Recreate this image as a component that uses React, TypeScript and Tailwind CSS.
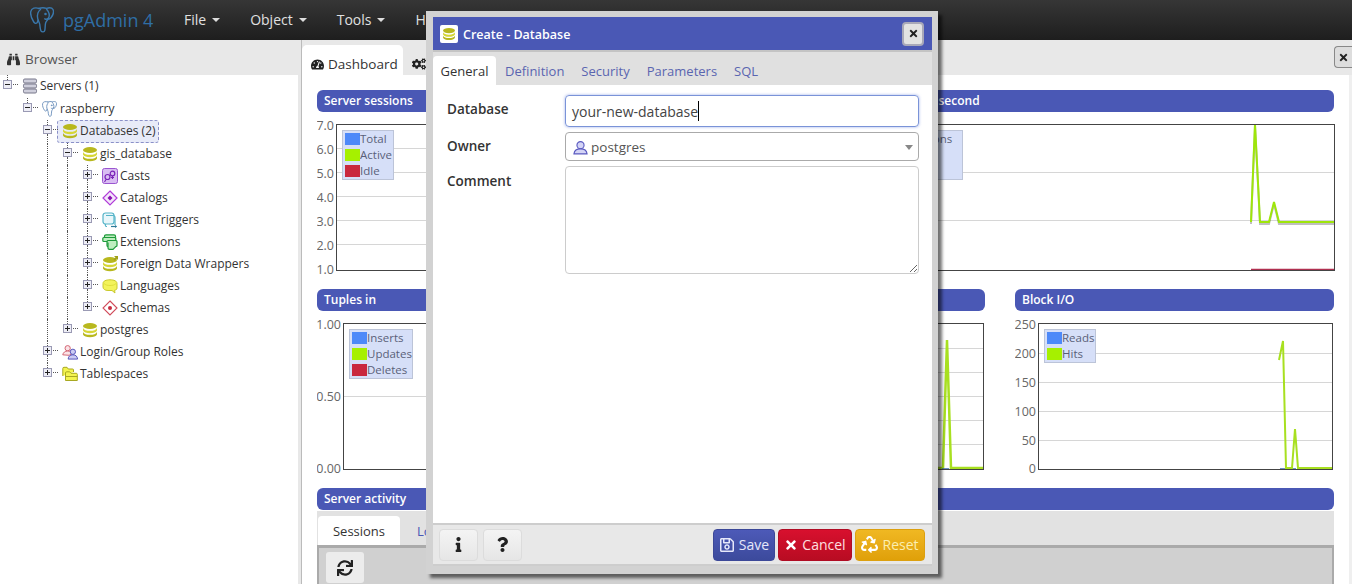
import React from "react";
import { FaBinoculars, FaTachometerAlt, FaCogs, FaTimes, FaInfo, FaQuestion, FaRegSave, FaRecycle, FaSync } from "react-icons/fa";

const Elephant = ({ className, color, sw }: { className: string; color: string; sw: string }) => (
  <svg viewBox="0 0 24 26" className={className} fill="none" stroke={color} strokeWidth={sw} strokeLinejoin="round" strokeLinecap="round">
    <path d="M9 1.500C5.500.2 1.500 1 .8 4.500c-.6 3.500 1 7.500 3 10.500 1 1.500 2.300 1.800 3.200.8.5-.6.8-1.500 1-2.300" />
    <path d="M9 1.500c2-.8 5-.9 7.500-.2 2.500-.8 5.500-.6 6.500 1.200 1.200 2.500-.2 6-2 8.300-.8 1-1.800 1.300-2.500 1" />
    <path d="M10.500 2.500C8 4.500 7 8 7.700 11.500c.5 2.500 1.800 4 2.100 6 .3 2 .2 4.500 1.200 6.300.9 1.500 3.300 1.500 3.800-.5.5-2.200.2-5 .8-7.300.5-2 2.200-3 3-4.800 1.200-2.800.5-6.200-2-9" />
    <path d="M18.500 11c-1.200 1.300-2.500 1.500-3.700.8" />
    <circle cx="15.500" cy="7" r=".6" fill={color} />
  </svg>
);

const Db = ({ c = "#b8b81e", arrow = false }: { c?: string; arrow?: boolean }) => (
  <svg viewBox="0 0 16 16" className="h-4 w-4">
    <ellipse cx="8" cy="4" rx="7" ry="3" fill={c} />
    <path d="M1 6c.8 2 3.500 2.800 7 2.800S14.200 8 15 6v2.500c-.8 1.800-3.500 2.700-7 2.700S1.800 10.300 1 8.500z" fill="#d6d635" />
    <path d="M1 10c.8 2 3.500 2.800 7 2.800s6.200-.8 7-2.800v2.500c-.8 1.800-3.500 2.700-7 2.700s-6.200-.9-7-2.700z" fill={c} />
    {arrow && <path d="M12 0h4v4l-1.300-1.300-2 2-1.200-1.200 2-2z" fill="#a0a018" />}
  </svg>
);

const Servers = () => (
  <svg viewBox="0 0 16 16" className="h-4 w-4" fill="#cfcfdc" stroke="#77778a" strokeWidth="1">
    <rect x="1.500" y="1" width="13" height="4" rx="1.300" />
    <rect x="1.500" y="6" width="13" height="4" rx="1.300" />
    <rect x="1.500" y="11" width="13" height="4" rx="1.300" />
  </svg>
);
const Casts = () => (
  <svg viewBox="0 0 16 16" className="h-4 w-4" fill="none">
    <rect x=".5" y=".5" width="15" height="15" rx="2" fill="#d9bdf2" stroke="#9a55d0" />
    <circle cx="5.500" cy="9" r="2.500" stroke="#7a22b8" strokeWidth="1.200" />
    <circle cx="10.500" cy="5.500" r="2.300" stroke="#7a22b8" strokeWidth="1.200" />
    <path d="M4 11.500l-1.500 2.500M10.500 8v3M9 9.500h3" stroke="#7a22b8" strokeWidth="1.100" />
  </svg>
);
const Catalogs = () => (
  <svg viewBox="0 0 16 16" className="h-4 w-4">
    <path d="M8 1l7 7-7 7-7-7z" fill="#f3e6fa" stroke="#b03ad8" strokeWidth="1.200" />
    <path d="M8 5.500l2.500 2.500L8 10.500 5.500 8z" fill="#8a10b0" />
  </svg>
);
const Events = () => (
  <svg viewBox="0 0 16 16" className="h-4 w-4" fill="#fff" stroke="#55b4c8" strokeWidth="1.200">
    <rect x="1" y="1" width="11" height="11" rx="2.500" fill="#e8f6fa" />
    <path d="M5 14.500h-.5C3 14.500 3.500 13 3.500 12M4 3.500h7c1.500 0 2 .8 2 2V13" fill="none" />
    <path d="M9 14.500h5.500" stroke="#2a7a98" />
    <path d="M13 13l2 1.500-2 1.500z" fill="#2a7a98" stroke="none" />
  </svg>
);
const Extensions = () => (
  <svg viewBox="0 0 16 16" className="h-4 w-4" fill="#bfeec0" stroke="#1d9a3a" strokeWidth="1.200">
    <rect x="2.500" y=".8" width="11" height="5" rx="1.500" />
    <rect x=".8" y="3.500" width="13" height="4" rx="1" />
    <rect x="5" y="6.500" width="10" height="6" rx="1" />
    <path d="M6 8.500v5.500c0 1 .8 1.300 1.500 1.300h3.500l3-3" />
  </svg>
);
const Languages = () => (
  <svg viewBox="0 0 16 16" className="h-4 w-4">
    <path d="M1 5.500C1 3 4 1.800 8 1.800s7 1.200 7 3.700v4.500c0 1.500-1 2-2.500 2.300l.5 2.700-3-2.500H6C3 12.500 1 11 1 9z" fill="#f3f35a" stroke="#c9c92c" />
    <path d="M2 5.500c1.500 1.500 3.500 2 6 2s4.500-.5 6-2" fill="none" stroke="#e0e03a" />
  </svg>
);
const Schemas = () => (
  <svg viewBox="0 0 16 16" className="h-4 w-4">
    <path d="M8 1l7 7-7 7-7-7z" fill="#fff" stroke="#d04a5a" strokeWidth="1.100" />
    <circle cx="8" cy="8" r="2" fill="#c82a3e" />
  </svg>
);
const Roles = () => (
  <svg viewBox="0 0 18 16" className="h-4 w-[17px]">
    <circle cx="6" cy="4" r="2.800" fill="#fbe3e6" stroke="#d0606e" />
    <path d="M.8 11c.5-2.500 2.300-4 5.200-4s4 1 4.500 3l-3 1.500z" fill="#fbe3e6" stroke="#d0606e" />
    <circle cx="11.500" cy="7.800" r="2.800" fill="#ccccf4" stroke="#5050b8" />
    <path d="M6.500 15.500c.3-3 2-4.500 5-4.500s4.700 1.500 5 4.500z" fill="#ccccf4" stroke="#5050b8" />
  </svg>
);
const Tablespaces = () => (
  <svg viewBox="0 0 16 16" className="h-4 w-4" fill="#f4f44e" stroke="#a8a822">
    <path d="M.8 10V2.500c0-.8.4-1.200 1.200-1.200h3l1.300 1.700h4.200c.8 0 1 .4 1 1v2" />
    <path d="M3.500 14.500V7c0-.8.4-1.200 1.200-1.200h3l1.300 1.500h5.300c.6 0 1 .4 1 1v6.200z" />
    <path d="M3.500 10.500h12" fill="none" />
  </svg>
);
const UserIcon = () => (
  <svg viewBox="0 0 16 16" className="h-[15px] w-[15px]" fill="#d4d4f6" stroke="#5a5ac0" strokeWidth="1.200">
    <circle cx="8" cy="5.500" r="3.800" />
    <path d="M1 14.800c.4-3.300 2.700-5.300 7-5.300s6.600 2 7 5.300z" />
  </svg>
);

const Expander = ({ open, more }: { open: boolean; more: boolean }) => (
  <div className="relative h-full w-5 shrink-0">
    <div className="absolute left-[7px] top-0 h-[5px] border-l border-dotted border-[#555]" />
    {more && <div className="absolute bottom-0 left-[7px] top-[14px] border-l border-dotted border-[#555]" />}
    <div className="absolute left-[13px] top-[9px] w-[5px] border-t border-dotted border-[#555]" />
    <div className="absolute left-[3px] top-[5px] flex h-[9px] w-[9px] items-center justify-center border border-[#9a9ab4] bg-[#eeeef6]">
      <div className="absolute h-px w-[5px] bg-[#222]" />
      {!open && <div className="absolute h-[5px] w-px bg-[#222]" />}
    </div>
  </div>
);

type RowT = { label: string; icon: React.ReactNode; guides: boolean[]; open?: boolean; more?: boolean; sel?: boolean; mt?: boolean };
const elephantSm = <Elephant className="h-4 w-[15px]" color="#6f93bd" sw="1.500" />;
const rows: RowT[] = [
  { label: "Servers (1)", icon: <Servers />, guides: [], open: true },
  { label: "raspberry", icon: elephantSm, guides: [false], open: true, mt: true },
  { label: "Databases (2)", icon: <Db />, guides: [false, false], open: true, more: true, sel: true },
  { label: "gis_database", icon: <Db />, guides: [false, false, true], open: true, more: true, mt: true },
  { label: "Casts", icon: <Casts />, guides: [false, false, true, true], more: true },
  { label: "Catalogs", icon: <Catalogs />, guides: [false, false, true, true], more: true },
  { label: "Event Triggers", icon: <Events />, guides: [false, false, true, true], more: true },
  { label: "Extensions", icon: <Extensions />, guides: [false, false, true, true], more: true },
  { label: "Foreign Data Wrappers", icon: <Db arrow />, guides: [false, false, true, true], more: true },
  { label: "Languages", icon: <Languages />, guides: [false, false, true, true], more: true },
  { label: "Schemas", icon: <Schemas />, guides: [false, false, true, true] },
  { label: "postgres", icon: <Db />, guides: [false, false, true] },
  { label: "Login/Group Roles", icon: <Roles />, guides: [false, false], more: true },
  { label: "Tablespaces", icon: <Tablespaces />, guides: [false, false] },
];

const TreeRow = ({ r }: { r: RowT }) => (
  <div className={r.mt ? "mt-px flex h-[22px] items-center" : "flex h-[22px] items-center"}>
    {r.guides.map((g, i) => (
      <div key={i} className="h-full w-5 shrink-0 pl-[7px]">
        {g && <div className="h-full border-l border-dotted border-[#555]" />}
      </div>
    ))}
    <Expander open={!!r.open} more={!!r.more} />
    {r.sel ? (
      <div className="-ml-[3px] flex h-[23px] items-center rounded-[3px] border border-dashed border-[#8a90c8] bg-[#e8ebf8] pl-[4px] pr-[2px]">
        <div className="flex w-[18px] shrink-0">{r.icon}</div>
        <span>{r.label}</span>
      </div>
    ) : (
      <>
        <div className="flex w-5 shrink-0 pl-[2px]">{r.icon}</div>
        <span>{r.label}</span>
      </>
    )}
  </div>
);

const BLUE = "#4d89f9";
const GREEN = "#a6f000";
const RED = "#c9283e";

type Line = { pts: string; color: string; w?: number; shadow?: boolean };
type ChartP = {
  x: number; y: number; w: number; h: number;
  plot: [number, number, number, number];
  ticks: [string, number][];
  grid: number[];
  legend?: { x: number; y: number; w: number; items: [string, string][] };
  lines?: Line[];
};

const Chart = ({ x, y, w, h, plot, ticks, grid, legend, lines }: ChartP) => {
  const [l, t, r, b] = plot;
  return (
    <svg viewBox={`${x} ${y} ${w} ${h}`} style={{ width: w, height: h }} className="block shrink-0">
      {grid.map((g) => (
        <line key={g} x1={l} x2={r} y1={g + 0.5} y2={g + 0.5} stroke="#d6d6d6" />
      ))}
      {lines?.filter((n) => n.shadow).map((n, i) => (
        <polyline key={i} points={n.pts} transform="translate(0 2)" fill="none" stroke="rgba(0,0,0,.25)" strokeWidth={n.w ?? 2} />
      ))}
      {lines?.map((n, i) => (
        <polyline key={i} points={n.pts} fill="none" stroke={n.color} strokeWidth={n.w ?? 2} />
      ))}
      <rect x={l + 0.5} y={t + 0.5} width={r - l} height={b - t} fill="none" stroke="#444" />
      {ticks.map(([s, ty]) => (
        <text key={s} x={l - 2} y={ty + 4.5} textAnchor="end" fontSize="12.500" fill="#666">{s}</text>
      ))}
      {legend && (
        <g>
          <rect x={legend.x + 0.5} y={legend.y + 0.5} width={legend.w} height={legend.items.length * 16 + 1} fill="#d6dff8" stroke="#bcc4d8" />
          {legend.items.map(([s, c], i) => (
            <g key={s}>
              <rect x={legend.x + 3} y={legend.y + 3 + i * 16} width={15} height={12} fill={c} />
              <text x={legend.x + 18} y={legend.y + 13 + i * 16} fontSize="11.500" fill="#5a5f78">{s}</text>
            </g>
          ))}
        </g>
      )}
    </svg>
  );
};

const SecHead = ({ title, className }: { title: React.ReactNode; className?: string }) => (
  <div className={`flex h-[22px] items-center rounded-[6px] bg-[#4a58b5] px-[7px] text-[12px] font-semibold text-white ${className ?? ""}`}>{title}</div>
);

const leg3 = (a: string, b: string, c: string): [string, string][] => [[a, BLUE], [b, GREEN], [c, RED]];

const MenuItem = ({ label }: { label: string }) => (
  <div className="flex items-center pr-[30px]">
    <span>{label}</span>
    <span className="ml-[6px] mt-[2px] h-0 w-0 border-x-[4px] border-t-[4px] border-x-transparent border-t-[#ddd]" />
  </div>
);

const Btn = ({ children, className }: { children: React.ReactNode; className: string }) => (
  <div className={`flex h-[32px] items-center justify-center rounded-[4px] border text-[14px] ${className}`}>{children}</div>
);

export default function App() {
  return (
    <div className="relative flex h-[584px] w-[1352px] flex-col overflow-hidden bg-white font-['Open_Sans',sans-serif] text-[#333]">
      {/* navbar */}
      <div className="flex h-10 shrink-0 items-center bg-gradient-to-b from-[#363636] to-[#1e1e1e]">
        <div className="flex w-[184px] shrink-0 items-center pl-[30px]">
          <Elephant className="h-[26px] w-[24px]" color="#3a78ac" sw="1.400" />
          <span className="ml-[9px] text-[18px] text-[#2f6ea5]">pgAdmin 4</span>
        </div>
        <div className="flex pb-[2px] text-[14px] text-[#e0e0e0]">
          <MenuItem label="File" />
          <MenuItem label="Object" />
          <MenuItem label="Tools" />
          <MenuItem label="Help" />
        </div>
      </div>

      <div className="flex min-h-0 flex-1">
        {/* browser */}
        <div className="flex w-[298px] shrink-0 flex-col text-[12px]">
          <div className="flex h-[35px] shrink-0 items-center gap-[5px] bg-[#e8e8e8] pl-[7px] pt-[3px] text-[13.5px] text-[#555]">
            <FaBinoculars className="h-[13px] w-[13px] text-[#333]" />
            <span>Browser</span>
          </div>
          <div className="flex-1">
            {rows.map((r) => (
              <TreeRow key={r.label} r={r} />
            ))}
          </div>
        </div>
        <div className="w-[3px] shrink-0 bg-[#e8e8e8]" />
        {/* dashboard */}
        <div className="flex min-w-0 flex-1 flex-col border-l border-[#bbb]">
          <div className="flex h-[35px] shrink-0 items-end justify-between bg-[#e8e8e8]">
            <div className="flex items-end">
              <div className="flex h-[30px] w-[101px] items-center gap-[4px] rounded-t-[5px] bg-white pl-[9px] pt-[8px] text-[13.5px]">
                <FaTachometerAlt className="h-[13px] w-[13px] text-[#222]" />
                <span>Dashboard</span>
              </div>
              <div className="flex h-[30px] items-center pl-[9px] pt-[8px]">
                <FaCogs className="h-[14px] w-[14px] text-[#222]" />
              </div>
            </div>
            <div className="mb-[7px] flex h-[22px] w-[18px] items-center justify-center rounded-l-[4px] border border-r-0 border-[#888] bg-[#ddd]">
              <FaTimes className="h-[11px] w-[11px] text-[#222]" />
            </div>
          </div>
          <div className="flex min-h-0 flex-1 border-r-[3px] border-[#efefef]">
            <div className="flex w-[1032px] flex-col pl-[15px] pt-[15px]">
              <div className="flex gap-[30px]">
                <div className="w-[493.5px]">
                  <SecHead title="Server sessions" />
                  <Chart x={317} y={112} w={493} h={177} plot={[336, 124, 810, 270]} ticks={[["7.0", 125], ["6.0", 149], ["5.0", 173], ["4.0", 197], ["3.0", 221], ["2.0", 245], ["1.0", 269]]} grid={[148, 172, 196, 220, 244]} legend={{ x: 342, y: 130, w: 51, items: leg3("Total", "Active", "Idle") }} />
                </div>
                <div className="w-[493.5px]">
                  <SecHead title={<span className="-ml-[9px]">Transactions per second</span>} />
                  <Chart x={840} y={112} w={494} h={177} plot={[859, 124, 1333, 270]} ticks={[["6", 125], ["4", 173], ["2", 221], ["0", 269]]} grid={[172, 220]} legend={{ x: 865, y: 130, w: 96, items: leg3("Transactions", "Commits", "Rollbacks") }} lines={[{ pts: "1250,269.5 1333,269.5", color: "#b03050", w: 1.5 }, { pts: "1250,222 1254,124 1259,222 1268,222 1273,202 1278,222 1333,222", color: "#9ee60a", w: 2, shadow: true }]} />
                </div>
              </div>
              <div className="flex gap-[30px]">
                <div className="w-[319px]">
                  <SecHead title="Tuples in" />
                  <Chart x={317} y={311} w={319} h={177} plot={[343, 323, 636, 469]} ticks={[["1.00", 324], ["0.50", 396], ["0.00", 468]]} grid={[396]} legend={{ x: 349, y: 329, w: 63, items: leg3("Inserts", "Updates", "Deletes") }} />
                </div>
                <div className="w-[319px]">
                  <SecHead title="Tuples out" />
                  <Chart x={666} y={311} w={319} h={177} plot={[692, 323, 983, 469]} ticks={[["100", 324], ["0", 468]]} grid={[348, 372, 396, 420, 444]} lines={[{ pts: "935,468 943,468 947,340 951,468 983,468", color: "#a8e020", w: 2.5 }, { pts: "942,469 949,469", color: "#3a6ab0", w: 1.5 }]} />
                </div>
                <div className="w-[319px]">
                  <SecHead title="Block I/O" />
                  <Chart x={1015} y={311} w={319} h={177} plot={[1038, 323, 1332, 469]} ticks={[["250", 324], ["200", 353], ["150", 382], ["100", 411], ["50", 440], ["0", 468]]} grid={[353, 382, 411, 440]} legend={{ x: 1044, y: 329, w: 51, items: [["Reads", BLUE], ["Hits", GREEN]] }} lines={[{ pts: "1280,469 1296,469", color: "#3a6ab0", w: 1.5 }, { pts: "1279,360 1283,341 1286,468 1292,468 1295,429 1298,468 1332,468", color: "#a8e020", w: 2 }]} />
                </div>
              </div>
              <SecHead title="Server activity" className="shrink-0" />
              <div className="mt-px flex min-h-0 flex-1 flex-col bg-[#e2e2e2]">
                <div className="flex h-[34px] shrink-0 items-end pl-px text-[13px]">
                  <div className="flex h-[29px] w-[82px] items-center justify-center rounded-t-[4px] bg-white pt-[3px]">Sessions</div>
                  <div className="flex h-[29px] items-center pl-[17px] pt-[3px] text-[#4a58b5]">Locks</div>
                </div>
                <div className="flex-1 border-x-[2px] border-t-[3px] border-[#aaa] bg-[#d0d0d0] pl-[7px] pt-[4px]">
                  <div className="flex h-[31px] w-[38px] items-center justify-center rounded-[3px] bg-[#ececec]">
                    <FaSync className="h-[16px] w-[16px] text-[#222]" />
                  </div>
                </div>
              </div>
            </div>
          </div>
        </div>
      </div>

      {/* modal */}
      <div className="absolute left-[426px] top-[11px] flex h-[563px] w-[512px] flex-col bg-[#d2d2d2] pb-[8px] pl-[7px] pr-[6px] pt-[6px] shadow-[4px_4px_3px_rgba(0,0,0,0.55)]">
        <div className="flex h-[33px] shrink-0 items-center bg-[#4a58b5] pl-[7px] pr-[8px]">
          <div className="flex h-[18px] w-[18px] items-center justify-center rounded-[2px] bg-white">
            <div className="scale-[0.85]"><Db /></div>
          </div>
          <span className="ml-[5px] flex-1 pt-[3px] text-[12.5px] font-semibold text-white">Create - Database</span>
          <div className="flex h-[24px] w-[22px] items-center justify-center rounded-[4px] border-2 border-[#a8a8b8] bg-[#e2e2e2]">
            <FaTimes className="h-[11px] w-[11px] text-[#222]" />
          </div>
        </div>
        <div className="flex min-h-0 flex-1 flex-col bg-white">
          <div className="flex h-[35px] shrink-0 items-end border-t-2 border-[#c4c4c4] bg-[#e0e0e0] text-[13px]">
            <div className="flex h-[29px] w-[63px] items-center justify-center rounded-t-[4px] bg-white pt-[3px] text-[#333]">General</div>
            <div className="flex h-[29px] items-center gap-[17px] pl-[9px] pt-[3px] text-[#5a65b0]">
              <span>Definition</span>
              <span>Security</span>
              <span>Parameters</span>
              <span>SQL</span>
            </div>
          </div>
          <div className="grid flex-1 grid-cols-[118px_1fr] content-start gap-y-[5px] pl-[14px] pr-[13px] pt-[10px] text-[13.5px]">
            <label className="pt-[4px] font-semibold">Database</label>
            <div className="flex h-[32px] items-center rounded-[4px] border border-[#7a93d8] pl-[6px] text-[14px] text-[#444] shadow-[0_0_3px_rgba(90,120,220,0.6)]">
              <span>your-new-database</span>
              <span className="h-[20px] w-px bg-black" />
            </div>
            <label className="pt-[4px] font-semibold">Owner</label>
            <div className="flex h-[29px] items-center rounded-[4px] border border-[#aaa] pl-[7px] pr-[5px] pt-px text-[#555]">
              <UserIcon />
              <span className="ml-[3px] flex-1">postgres</span>
              <span className="h-0 w-0 border-x-[4px] border-t-[5px] border-x-transparent border-t-[#888]" />
            </div>
            <label className="pt-[5px] font-semibold">Comment</label>
            <textarea readOnly className="h-[108px] rounded-[4px] border border-[#ccc] outline-none" />
          </div>
          <div className="flex h-[43px] shrink-0 items-center justify-between border-y-2 border-[#cdcdcd] bg-[#e8e8e8] pl-[6px] pr-[7px]">
            <div className="flex gap-[5px]">
              <Btn className="w-[39px] border-[#dcdcdc] bg-gradient-to-b from-[#f4f4f4] to-[#e6e6e6] text-[#222]"><FaInfo className="h-[15px] w-[15px]" /></Btn>
              <Btn className="w-[39px] border-[#dcdcdc] bg-gradient-to-b from-[#f4f4f4] to-[#e6e6e6] text-[#222]"><FaQuestion className="h-[15px] w-[15px]" /></Btn>
            </div>
            <div className="flex gap-[3px]">
              <Btn className="w-[62px] gap-[4px] border-[#3c4898] bg-gradient-to-b from-[#4d5ab8] to-[#3c4a9c] text-[#e6e8fa]"><FaRegSave className="h-[16px] w-[16px]" />Save</Btn>
              <Btn className="w-[74px] gap-[4px] border-[#b00c24] bg-gradient-to-b from-[#d8102e] to-[#b80c22] text-[#ffe0e0]"><FaTimes className="h-[14px] w-[14px] text-white" />Cancel</Btn>
              <Btn className="w-[70px] gap-[4px] border-[#dca010] bg-gradient-to-b from-[#f0b822] to-[#e0a008] text-[#fbeeb0]"><FaRecycle className="h-[17px] w-[17px] text-white" />Reset</Btn>
            </div>
          </div>
        </div>
      </div>
    </div>
  );
}
